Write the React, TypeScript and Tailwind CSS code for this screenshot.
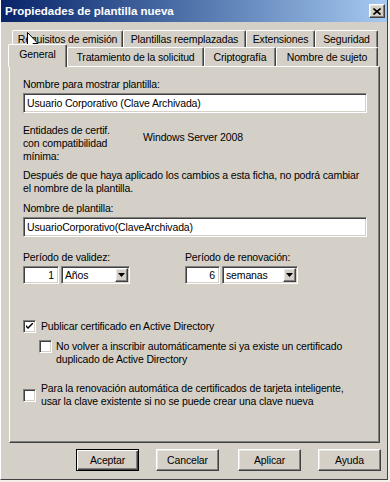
import React from "react";

const font = "font-['Liberation_Sans',Arial,sans-serif] text-[10.5px] tracking-[-0.15px] text-black";

const sunken =
  "bg-white border border-t-[#808080] border-l-[#808080] border-b-white border-r-white shadow-[inset_1px_1px_0_#404040,inset_-1px_-1px_0_#d4d0c8]";
const raised =
  "bg-[#d4d0c8] border border-t-white border-l-white border-r-[#404040] border-b-[#404040] shadow-[inset_-1px_-1px_0_#808080,inset_1px_1px_0_#e8e6e0]";

function Checkbox({ checked }: { checked?: boolean }) {
  return (
    <div className={`w-[13px] h-[13px] shrink-0 ${sunken} relative`}>
      {checked && (
        <svg width="7" height="7" viewBox="0 0 7 7" className="absolute left-[2px] top-[2px]">
          <path d="M0 2 L0 4 L2 6 L7 1 L7 -1 L2 4 Z" fill="#000" />
        </svg>
      )}
    </div>
  );
}

function Select({ value, width }: { value: string; width: string }) {
  return (
    <div className={`${width} h-[18px] ${sunken} flex items-center justify-between pl-[3px] pr-[1px]`}>
      <span className="leading-[13px]">{value}</span>
      <div className={`w-[13px] h-[14px] ${raised} flex items-center justify-center`}>
        <svg width="7" height="4" viewBox="0 0 7 4">
          <path d="M0 0 H7 L3.5 4 Z" fill="#000" />
        </svg>
      </div>
    </div>
  );
}

function NumBox({ value, width }: { value: string; width: string }) {
  return (
    <div className={`${width} h-[18px] ${sunken} flex items-center justify-end pr-[4px]`}>
      <span className="leading-[13px]">{value}</span>
    </div>
  );
}

function Tab({ label, width, h = "h-[17px]" }: { label: string; width: string; h?: string }) {
  return (
    <div
      className={`${width} ${h} shrink-0 bg-[#d4d0c8] border-t border-l border-t-white border-l-white border-r border-r-[#404040] rounded-t-[2px] shadow-[inset_-1px_0_0_#808080] flex items-center justify-center leading-[13px]`}
    >
      {label}
    </div>
  );
}

function Btn({ label, def, className = "" }: { label: string; def?: boolean; className?: string }) {
  const cls = def
    ? "bg-[#d4d0c8] border border-black shadow-[inset_1px_1px_0_#ffffff,inset_-1px_-1px_0_#404040,inset_-2px_-2px_0_#808080]"
    : raised;
  return (
    <div className={`w-[63px] h-[22px] ${cls} flex items-center justify-center leading-[13px] ${className}`}>
      {label}
    </div>
  );
}

export default function App() {
  return (
    <div className={`w-[390px] h-[482px] bg-[#f3f0e8] relative overflow-hidden ${font}`}>
      <div className="w-[388px] h-[480px] bg-[#d4d0c8] border-l border-l-white border-r border-r-[#404040] border-b border-b-[#404040] flex flex-col">
        {/* Title bar */}
        <div className="h-[22px] bg-gradient-to-r from-[#0a246a] to-[#a6caf0] flex items-center justify-between pl-[4px] pr-[2px]">
          <span className="text-white font-bold text-[11.5px] tracking-[0px] leading-[14px]">
            Propiedades de plantilla nueva
          </span>
          <div className={`w-[16px] h-[14px] ${raised} flex items-center justify-center`}>
            <svg width="8" height="7" viewBox="0 0 8 7">
              <path d="M0.5 0.5 L7.5 6.5 M7.5 0.5 L0.5 6.5" stroke="#000" strokeWidth="1.6" />
            </svg>
          </div>
        </div>

        {/* Tabs + panel */}
        <div className="ml-[8px] mr-[6px] mt-[8px] flex flex-col">
          <div className="flex pl-[3px] h-[17px]">
            <Tab label="Requisitos de emisión" width="w-[111px]" />
            <Tab label="Plantillas reemplazadas" width="w-[123px]" />
            <Tab label="Extensiones" width="w-[69px]" />
            <Tab label="Seguridad" width="w-[63px]" />
          </div>
          <div className="flex items-end h-[19px]">
            <div className="relative z-10 -ml-px -mb-px w-[59px] h-[23px] bg-[#d4d0c8] border-t border-l border-t-white border-l-white border-r border-r-[#404040] rounded-t-[2px] shadow-[inset_-1px_0_0_#808080] flex items-start justify-center pt-[3px] leading-[13px]">
              General
            </div>
            <Tab label="Tratamiento de la solicitud" width="w-[137px]" h="h-[19px]" />
            <Tab label="Criptografía" width="w-[72px]" h="h-[19px]" />
            <Tab label="Nombre de sujeto" width="w-[102px]" h="h-[19px]" />
          </div>

          {/* Panel */}
          <div className="w-[371px] h-[377px] border border-t-white border-l-white border-r-[#404040] border-b-[#404040] shadow-[inset_-1px_-1px_0_#808080] pl-[13px] pr-[12px] flex flex-col leading-[13px]">
            <div className="mt-[11px]">Nombre para mostrar plantilla:</div>
            <div className={`mt-[2px] w-[344px] h-[20px] ${sunken} flex items-center pl-[3px]`}>
              Usuario Corporativo (Clave Archivada)
            </div>

            <div className="mt-[11px] flex">
              <div className="w-[120px]">
                <div>Entidades de certif.</div>
                <div>con compatibilidad</div>
                <div>mínima:</div>
              </div>
              <div className="mt-[7px]">Windows Server 2008</div>
            </div>

            <div className="mt-[6px]">
              <div>Después de que haya aplicado los cambios a esta ficha, no podrá cambiar</div>
              <div>el nombre de la plantilla.</div>
            </div>

            <div className="mt-[7px]">Nombre de plantilla:</div>
            <div className={`mt-[2px] w-[344px] h-[20px] ${sunken} flex items-center pl-[3px]`}>
              UsuarioCorporativo(ClaveArchivada)
            </div>

            <div className="mt-[14px] flex">
              <div className="w-[162px] flex flex-col">
                <div>Período de validez:</div>
                <div className="mt-[2px] flex gap-[2px]">
                  <NumBox value="1" width="w-[36px]" />
                  <Select value="Años" width="w-[69px]" />
                </div>
              </div>
              <div className="flex flex-col">
                <div>Período de renovación:</div>
                <div className="mt-[2px] flex gap-[2px]">
                  <NumBox value="6" width="w-[35px]" />
                  <Select value="semanas" width="w-[76px]" />
                </div>
              </div>
            </div>

            <div className="mt-[36px] flex items-center gap-[5px]">
              <Checkbox checked />
              <span>Publicar certificado en Active Directory</span>
            </div>

            <div className="mt-[7px] ml-[16px] flex items-start gap-[4px]">
              <Checkbox />
              <div>
                <div>No volver a inscribir automáticamente si ya existe un certificado</div>
                <div>duplicado de Active Directory</div>
              </div>
            </div>

            <div className="mt-[16px] flex items-center gap-[5px]">
              <Checkbox />
              <div>
                <div>Para la renovación automática de certificados de tarjeta inteligente,</div>
                <div>usar la clave existente si no se puede crear una clave nueva</div>
              </div>
            </div>
          </div>

          {/* Buttons */}
          <div className="mt-[6px] flex justify-end">
            <Btn label="Aceptar" def />
            <Btn label="Cancelar" className="ml-[17px]" />
            <Btn label="Aplicar" className="ml-[19px]" />
            <Btn label="Ayuda" className="ml-[17px]" />
          </div>
        </div>
      </div>

      {/* Mouse cursor */}
      <svg className="absolute left-[27px] top-[32px]" width="12" height="20" viewBox="0 0 12 20">
        <path
          d="M0.5 0.5 L0.5 16 L4 12.5 L6.5 18.5 L8.5 17.5 L6 11.5 L11 11.5 Z"
          fill="#fff"
          stroke="#000"
          strokeWidth="1"
          strokeLinejoin="round"
        />
      </svg>
    </div>
  );
}
